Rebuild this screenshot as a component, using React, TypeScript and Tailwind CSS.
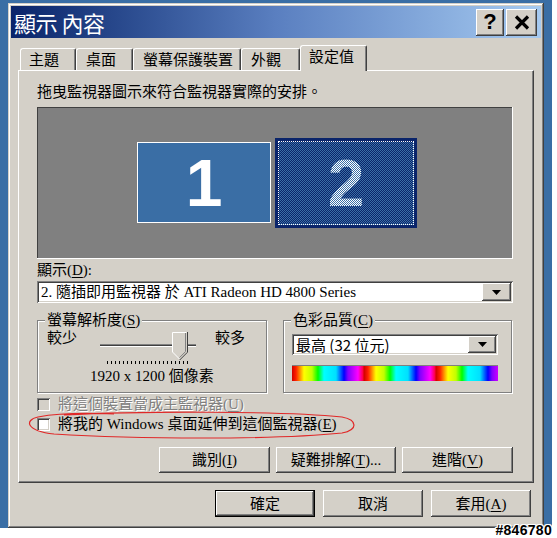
import React from "react";

const raised =
  "shadow-[inset_-1px_-1px_#404040,inset_1px_1px_#ffffff,inset_-2px_-2px_#808080]";
const sunken =
  "shadow-[inset_1px_1px_#808080,inset_-1px_-1px_#ffffff,inset_2px_2px_#404040,inset_-2px_-2px_#d4d0c8]";

function U({ c }: { c: string }) {
  return <span className="underline underline-offset-[2px]">{c}</span>;
}

function Arrow() {
  return (
    <svg width="9" height="5" viewBox="0 0 9 5">
      <polygon points="0,0 9,0 4.5,5" fill="#000" />
    </svg>
  );
}

function Thumb() {
  return (
    <svg width="16" height="28" viewBox="0 0 16 28" className="block">
      <polygon points="0,0 15,0 15,20 7.5,27.5 0,20" fill="#d4d0c8" />
      <polyline points="0.5,20 0.5,0.5 14.5,0.5" fill="none" stroke="#ffffff" />
      <polyline points="0.5,20 7.5,27" fill="none" stroke="#ffffff" />
      <polyline points="13.5,1 13.5,19.6 7.5,25.6" fill="none" stroke="#808080" />
      <polyline points="15.5,0 15.5,20.2 7.5,28.2" fill="none" stroke="#404040" />
    </svg>
  );
}

export default function App() {
  return (
    <div className="relative w-[557px] h-[538px] bg-white font-['Liberation_Serif','Noto_Sans_CJK_TC',serif] text-[15px] leading-[20px] text-black">
      {/* desktop */}
      <div className="w-[552px] h-[528px] bg-[#3a6ea5] px-[8px] pt-[3px]">
        {/* window */}
        <div className="h-[525px] bg-[#d4d0c8] p-[3px] shadow-[inset_-1px_-1px_#404040,inset_1px_1px_#d4d0c8,inset_-2px_-2px_#808080,inset_2px_2px_#ffffff]">
          {/* title bar */}
          <div className="h-[32px] flex items-center bg-gradient-to-r from-[#0a246a] via-[#5a7fc0] to-[#a6caf0]">
            <div className="flex-1 pl-[3px] text-white text-[22px] leading-none font-['Noto_Sans_CJK_TC',sans-serif] tracking-[-0.5px]">
              顯示 內容
            </div>
            <div className="flex items-center gap-[2px] mr-[4px]">
              <div
                className={`w-[28px] h-[27px] bg-[#d4d0c8] ${raised} flex items-center justify-center font-['Liberation_Sans',sans-serif] font-bold text-[22px] leading-none pb-[1px]`}
              >
                ?
              </div>
              <div
                className={`w-[31px] h-[27px] bg-[#d4d0c8] ${raised} flex items-center justify-center`}
              >
                <svg width="16" height="15" viewBox="0 0 16 15">
                  <path d="M2 1.5 L14 13.5 M14 1.5 L2 13.5" stroke="#000" strokeWidth="3.2" />
                </svg>
              </div>
            </div>
          </div>

          {/* body */}
          <div className="px-[7px] pt-[7px]">
            {/* tabs */}
            <div className="flex items-end h-[25px] pl-[2px]">
              <div className="w-[56px] h-[22px] border-l border-t border-white rounded-tl-[3px] border-r border-r-[#404040] rounded-tr-[2px] shadow-[inset_-1px_0_#808080] pl-[8px] pt-[1px]">
                主題
              </div>
              <div className="w-[57px] h-[22px] border-l border-t border-white rounded-tl-[3px] border-r border-r-[#404040] rounded-tr-[2px] shadow-[inset_-1px_0_#808080] pl-[9px] pt-[1px]">
                桌面
              </div>
              <div className="w-[108px] h-[22px] border-l border-t border-white rounded-tl-[3px] border-r border-r-[#404040] rounded-tr-[2px] shadow-[inset_-1px_0_#808080] pl-[9px] pt-[1px]">
                螢幕保護裝置
              </div>
              <div className="w-[59px] h-[22px] border-l border-t border-white rounded-tl-[3px] border-r border-r-[#404040] rounded-tr-[2px] shadow-[inset_-1px_0_#808080] pl-[9px] pt-[1px]">
                外觀
              </div>
              <div className="relative z-10 -mb-[1px] w-[67px] h-[26px] bg-[#d4d0c8] border-l border-t border-white rounded-tl-[3px] border-r border-r-[#404040] rounded-tr-[2px] shadow-[inset_-1px_0_#808080] pl-[8px] pt-[1px]">
                設定值
              </div>
            </div>

            {/* panel */}
            <div className="h-[413px] border-l border-t border-white border-r border-b border-r-[#404040] border-b-[#404040] shadow-[inset_-1px_-1px_#808080] pl-[18px] pr-[20px]">
              <div className="mt-[11px] h-[20px]">拖曳監視器圖示來符合監視器實際的安排。</div>

              {/* monitor canvas */}
              <div className="mt-[5px] h-[152px] bg-[#808080] border-r border-b border-white shadow-[inset_1px_1px_#404040] flex items-center pl-[100px] gap-[4px]">
                <div className="w-[134px] h-[81px] bg-[#3a6ea5] border border-white flex items-center justify-center">
                  <span className="font-['Liberation_Sans',sans-serif] font-bold text-[66px] leading-none text-white">
                    1
                  </span>
                </div>
                <div className="w-[142px] h-[90px] border-[3px] border-[#0a246a] bg-[image:repeating-conic-gradient(#3a6ea5_0_25%,#0a246a_0_50%)] bg-[length:2px_2px]">
                  <div className="w-full h-full border border-dotted border-white flex items-center justify-center">
                    <span className="font-['Liberation_Sans',sans-serif] font-bold text-[66px] leading-none text-transparent bg-clip-text bg-[image:repeating-conic-gradient(#ffffff_0_25%,#3a6ea5_0_50%)] bg-[length:2px_2px]">
                      2
                    </span>
                  </div>
                </div>
              </div>

              <div className="mt-[1px] h-[20px]">
                顯示(<U c="D" />):
              </div>

              {/* display combo */}
              <div className={`mt-[1px] h-[22px] bg-white ${sunken} p-[2px] flex items-center`}>
                <div className="flex-1 pl-[2px] whitespace-nowrap">
                  2. 隨插即用監視器 於 ATI Radeon HD 4800 Series
                </div>
                <div className={`w-[29px] h-full bg-[#d4d0c8] ${raised} flex items-center justify-center`}>
                  <Arrow />
                </div>
              </div>

              {/* groups */}
              <div className="mt-[17px] flex gap-[16px]">
                <div className="w-[230px] h-[73px] border border-[#808080] shadow-[inset_1px_1px_#ffffff,1px_1px_#ffffff]">
                  <div className="-mt-[11px] ml-[7px] px-[2px] w-fit h-[20px] bg-[#d4d0c8]">
                    螢幕解析度(<U c="S" />)
                  </div>
                  <div className="flex items-start h-[34px] pl-[9px]">
                    <div className="w-[53px] leading-[16px]">較少</div>
                    <div className="relative w-[96px] h-[34px]">
                      <div className="absolute left-0 right-0 top-[14px] h-[3px] border-t border-[#808080] bg-[#404040] border-b border-b-white" />
                      <div className="absolute left-[72px] top-[2px]">
                        <Thumb />
                      </div>
                      <div className="absolute left-[7px] top-[31px] w-[84px] h-[3px] bg-[image:repeating-linear-gradient(90deg,#000000_0px,#000000_1px,transparent_1px,transparent_4px)]" />
                    </div>
                    <div className="ml-[19px] leading-[16px]">較多</div>
                  </div>
                  <div className="mt-[2px] h-[20px] text-center">1920 x 1200 個像素</div>
                </div>

                <div className="w-[229px] h-[73px] border border-[#808080] shadow-[inset_1px_1px_#ffffff,1px_1px_#ffffff]">
                  <div className="-mt-[11px] ml-[7px] px-[2px] w-fit h-[20px] bg-[#d4d0c8]">
                    色彩品質(<U c="C" />)
                  </div>
                  <div className={`ml-[8px] mt-[4px] w-[206px] h-[21px] bg-white ${sunken} p-[2px] flex items-center`}>
                    <div className="flex-1 pl-[2px] whitespace-nowrap font-['Noto_Sans_CJK_TC',sans-serif] text-[15px] leading-none">
                      最高 (32 位元)
                    </div>
                    <div className={`w-[28px] h-full bg-[#d4d0c8] ${raised} flex items-center justify-center`}>
                      <Arrow />
                    </div>
                  </div>
                  <div className="ml-[8px] mt-[10px] w-[206px] h-[16px] border-t border-[#808080] bg-[image:repeating-linear-gradient(90deg,#d00000_0px,#ff2000_4px,#ffff00_12px,#c0ff00_20px,#00ff00_26px,#00ffff_32px,#00e0ff_44px,#0000ff_52px,#8000ff_56px,#ff00ff_66px,#ff0040_71px,#d00000_72px)]" />
                </div>
              </div>

              {/* checkboxes */}
              <div className="mt-[1px] h-[20px] flex items-center gap-[8px]">
                <div className={`w-[13px] h-[13px] bg-[#d4d0c8] ${sunken}`} />
                <span className="text-[#808080] [text-shadow:1px_1px_0_#ffffff]">
                  將這個裝置當成主監視器(<U c="U" />)
                </span>
              </div>
              <div className="h-[20px] flex items-center gap-[8px]">
                <div className={`w-[13px] h-[13px] bg-white ${sunken}`} />
                <span className="whitespace-nowrap">
                  將我的 Windows 桌面延伸到這個監視器(<U c="E" />)
                </span>
              </div>

              {/* action buttons */}
              <div className="mt-[13px] flex justify-end gap-[6px]">
                <div className={`w-[111px] h-[26px] bg-[#d4d0c8] ${raised} flex items-center justify-center`}>
                  識別(<U c="I" />)
                </div>
                <div className={`w-[120px] h-[26px] bg-[#d4d0c8] ${raised} flex items-center justify-center`}>
                  疑難排解(<U c="T" />)...
                </div>
                <div className={`w-[111px] h-[26px] bg-[#d4d0c8] ${raised} flex items-center justify-center`}>
                  進階(<U c="V" />)
                </div>
              </div>
            </div>

            {/* dialog buttons */}
            <div className="mt-[7px] mr-[3px] flex justify-end gap-[8px]">
              <div className="w-[100px] h-[27px] border border-black bg-[#d4d0c8] shadow-[inset_-1px_-1px_#404040,inset_1px_1px_#ffffff,inset_-2px_-2px_#808080] flex items-center justify-center">
                確定
              </div>
              <div className={`w-[100px] h-[27px] bg-[#d4d0c8] ${raised} flex items-center justify-center`}>
                取消
              </div>
              <div className={`w-[100px] h-[27px] bg-[#d4d0c8] ${raised} flex items-center justify-center`}>
                套用(<U c="A" />)
              </div>
            </div>
          </div>
        </div>
      </div>

      {/* red annotation ellipse */}
      <svg className="absolute left-[24px] top-[410px]" width="336" height="30" viewBox="0 0 336 30">
        <path
          d="M40 5 C120 1 260 1 318 7 C334 10 334 20 318 23 C250 30 110 29 30 24 C2 21 0 10 14 7 C40 2 70 3 90 4"
          fill="none"
          stroke="#e02828"
          strokeWidth="1.2"
        />
      </svg>

      {/* watermark */}
      <div className="absolute right-[5px] bottom-[1px] font-['Liberation_Sans',sans-serif] font-bold text-[14px] tracking-[0.3px] leading-none text-black [text-shadow:-1px_-1px_0_#fff,1px_-1px_0_#fff,-1px_1px_0_#fff,1px_1px_0_#fff]">
        #846780
      </div>
    </div>
  );
}
